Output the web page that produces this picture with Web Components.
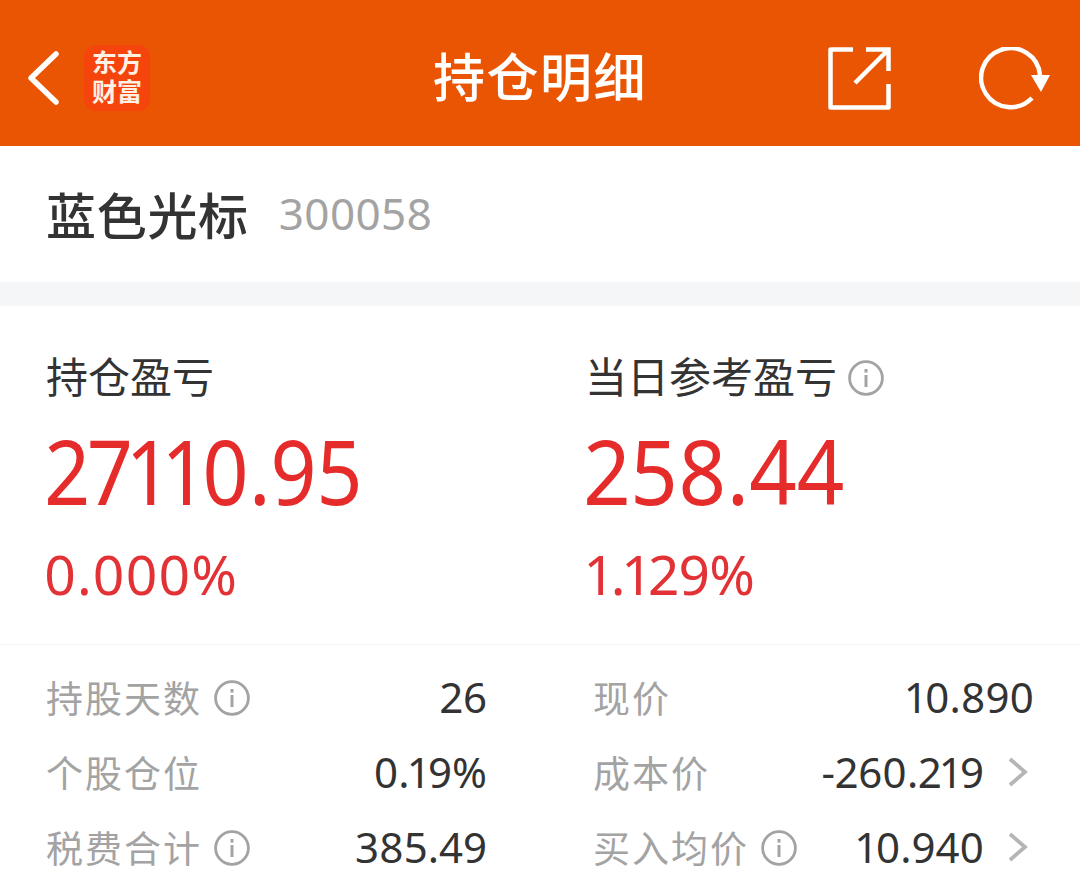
<!DOCTYPE html>
<html>
<head>
<meta charset="utf-8">
<style>
  html, body { margin: 0; padding: 0; background: #fff; }
  body { width: 1080px; height: 880px; overflow: hidden; font-family: "Noto Sans", "Noto Sans CJK SC", sans-serif; }
</style>
</head>
<body>
<top-bar></top-bar>
<stock-title name="蓝色光标" code="300058"></stock-title>
<profit-panel></profit-panel>
<detail-grid>
  <detail-row label="持股天数" value="26" info></detail-row>
  <detail-row label="现价" value="10.890" wide></detail-row>
  <detail-row label="个股仓位" value="0.19%"></detail-row>
  <detail-row label="成本价" value="-260.219" wide arrow></detail-row>
  <detail-row label="税费合计" value="385.49" info></detail-row>
  <detail-row label="买入均价" value="10.940" wide arrow info></detail-row>
</detail-grid>
<script>
const infoIcon = (size) => `<svg width="${size}" height="${size}" viewBox="0 0 36 36" fill="none"><circle cx="18" cy="18" r="16.4" stroke="#a3a3a3" stroke-width="2.8"/><rect x="16.5" y="9" width="3" height="3.6" fill="#a3a3a3"/><rect x="16.5" y="15" width="3" height="12" fill="#a3a3a3"/></svg>`;

class TopBar extends HTMLElement {
  constructor() {
    super();
    this.attachShadow({ mode: "open" });
    this.shadowRoot.innerHTML = `
<style>
  :host { display: flex; align-items: center; height: 146px; box-sizing: border-box; padding-top: 10px; background: #e95503; color: #fff; position: relative; }
  .left { display: flex; align-items: center; padding-left: 26px; gap: 24px; }
  .logo { width: 66px; height: 66px; border-radius: 12px; background: #f5440c; color: #fff1e4; font: 700 25px/29px "Liberation Sans", "Noto Sans CJK SC", sans-serif; display: flex; flex-direction: column; align-items: center; justify-content: center; }
  .title { position: absolute; left: 200px; right: 200px; top: 2px; bottom: 0; display: flex; align-items: center; justify-content: center; font: 500 52px "Noto Sans CJK SC", sans-serif; letter-spacing: 1.5px; }
  .right { margin-left: auto; display: flex; align-items: center; gap: 88px; padding-right: 30px; }
  svg { display: block; }
</style>
<div class="left">
  <svg width="34" height="56" viewBox="0 0 34 56" fill="none"><path d="M30 4 L5 28 L30 52" stroke="#fff" stroke-width="5.5" stroke-linecap="round" stroke-linejoin="round"/></svg>
  <div class="logo"><span>东方</span><span>财富</span></div>
</div>
<div class="title">持仓明细</div>
<div class="right">
  <svg width="63" height="63" viewBox="0 0 63 63" fill="none" stroke="#fff" stroke-width="4.5"><path d="M25 2.5 H2.5 V60.5 H60.5 V37" stroke-linejoin="round"/><path d="M27 36 L59 4 M38 2.5 H60.5 V24"/></svg>
  <svg width="71" height="63" viewBox="0 0 71 63" fill="none"><path d="M61 28 A29.5 29.5 0 1 0 53 51" stroke="#fff" stroke-width="4.5"/><path d="M52 28 H71 L62 45 Z" fill="#fff"/></svg>
</div>`;
  }
}
customElements.define("top-bar", TopBar);

class StockTitle extends HTMLElement {
  constructor() {
    super();
    this.attachShadow({ mode: "open" });
    this.shadowRoot.innerHTML = `
<style>
  :host { display: flex; align-items: center; height: 134px; padding: 0 0 2px 46px; gap: 30px; background: #fff; border-bottom: 24px solid #f5f6f8; }
  .name { font: 500 50px "Noto Sans CJK SC", sans-serif; color: #333; letter-spacing: 0.7px; }
  .code { font: 400 44px "Noto Sans", sans-serif; font-variant-numeric: proportional-nums; color: #a3a3a3; }
</style>
<span class="name"></span><span class="code"></span>`;
    this.shadowRoot.querySelector(".name").textContent = this.getAttribute("name");
    this.shadowRoot.querySelector(".code").textContent = this.getAttribute("code");
  }
}
customElements.define("stock-title", StockTitle);

class ProfitBlock extends HTMLElement {
  constructor() {
    super();
    this.attachShadow({ mode: "open" });
    this.shadowRoot.innerHTML = `
<style>
  :host { display: flex; flex-direction: column; }
  .head { display: flex; align-items: center; gap: 11px; height: 50px; margin-top: -5px; font: 400 42px "Noto Sans CJK SC", sans-serif; color: #333; }
  .big { font: 400 90px/1 "Noto Sans", sans-serif; font-variant-numeric: proportional-nums; color: #e62b2b; margin: 26px 0 0 -1px; height: 89px; transform: scaleX(var(--big-scale, 1)); transform-origin: left center; }
  .pct { font: 400 55px/1 "Noto Sans", sans-serif; font-variant-numeric: proportional-nums; letter-spacing: var(--pct-spacing, 0); color: #e23236; margin: 32px 0 0 var(--pct-shift, 0); }
</style>
<div class="head"><span class="t"></span><slot></slot></div>
<div class="big"></div>
<div class="pct"></div>`;
    this.shadowRoot.querySelector(".t").textContent = this.getAttribute("label");
    this.shadowRoot.querySelector(".big").textContent = this.getAttribute("amount");
    this.shadowRoot.querySelector(".pct").textContent = this.getAttribute("pct");
  }
}
customElements.define("profit-block", ProfitBlock);

class ProfitPanel extends HTMLElement {
  constructor() {
    super();
    this.attachShadow({ mode: "open" });
    this.shadowRoot.innerHTML = `
<style>
  :host { display: grid; grid-template-columns: 539px 1fr; height: 339px; padding: 48px 0 0 46px; box-sizing: border-box; border-bottom: 1px solid #f4f4f4; }
  span { display: flex; margin-top: 8px; }
</style>
<profit-block label="持仓盈亏" amount="27110.95" pct="0.000%" style="--pct-spacing: 0.8px; --pct-shift: -2px; --big-scale: 0.895"></profit-block>
<profit-block label="当日参考盈亏" amount="258.44" pct="1.129%" style="--pct-spacing: -0.6px; --pct-shift: 2px; --big-scale: 0.925"><span>${infoIcon(36)}</span></profit-block>`;
  }
}
customElements.define("profit-panel", ProfitPanel);

class DetailGrid extends HTMLElement {
  constructor() {
    super();
    this.attachShadow({ mode: "open" });
    this.shadowRoot.innerHTML = `
<style>
  :host { display: grid; grid-template-columns: 441px 441px; column-gap: 106px; grid-auto-rows: 75px; padding: 14px 0 0 46px; }
</style>
<slot></slot>`;
  }
}
customElements.define("detail-grid", DetailGrid);

class DetailRow extends HTMLElement {
  constructor() {
    super();
    this.attachShadow({ mode: "open" });
    const info = this.hasAttribute("info") ? `<span class="i">${infoIcon(36)}</span>` : "";
    const arrow = this.hasAttribute("arrow")
      ? `<svg class="a" width="20" height="30" viewBox="0 0 20 30" fill="none"><path d="M2 2 L17 15 L2 28" stroke="#b5b5b5" stroke-width="3.8"/></svg>` : "";
    this.shadowRoot.innerHTML = `
<style>
  :host { display: flex; align-items: center; }
  .l { font: 400 37px "Noto Sans CJK SC", sans-serif; color: #a3a3a3; letter-spacing: 2px; }
  .i { display: flex; margin: 3px 0 0 12px; }
  .v { margin-left: auto; font: 400 42px "Noto Sans", sans-serif; font-variant-numeric: proportional-nums; color: #333; }
  .a { margin-left: 24px; margin-right: 6px; }
</style>
<span class="l"></span>${info}<span class="v"></span>${arrow}`;
    this.shadowRoot.querySelector(".l").textContent = this.getAttribute("label");
    this.shadowRoot.querySelector(".v").textContent = this.getAttribute("value");
  }
}
customElements.define("detail-row", DetailRow);
</script>
</body>
</html>
